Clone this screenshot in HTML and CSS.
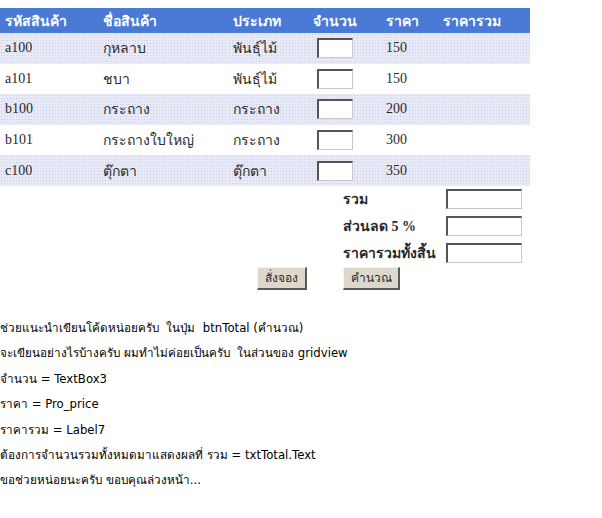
FILE: index.html
```html
<!DOCTYPE html>
<html>
<head>
<meta charset="utf-8">
<link rel="stylesheet" href="styles.css">
</head>
<body>
<table class="grid">
  <colgroup>
    <col class="c1"><col class="c2"><col class="c3"><col class="c4"><col class="c5"><col class="c6">
  </colgroup>
  <thead>
    <tr class="head"><th>รหัสสินค้า</th><th>ชื่อสินค้า</th><th>ประเภท</th><th>จำนวน</th><th>ราคา</th><th>ราคารวม</th></tr>
  </thead>
  <tbody>
    <tr class="alt"><td>a100</td><td>กุหลาบ</td><td>พันธุ์ไม้</td><td class="q"><span class="box qty"></span></td><td>150</td><td></td></tr>
    <tr><td>a101</td><td>ชบา</td><td>พันธุ์ไม้</td><td class="q"><span class="box qty"></span></td><td>150</td><td></td></tr>
    <tr class="alt"><td>b100</td><td>กระถาง</td><td>กระถาง</td><td class="q"><span class="box qty"></span></td><td>200</td><td></td></tr>
    <tr><td>b101</td><td>กระถางใบใหญ่</td><td>กระถาง</td><td class="q"><span class="box qty"></span></td><td>300</td><td></td></tr>
    <tr class="alt"><td>c100</td><td>ตุ๊กตา</td><td>ตุ๊กตา</td><td class="q"><span class="box qty"></span></td><td>350</td><td></td></tr>
  </tbody>
</table>
<div class="summary">
  <div class="srow"><span class="slabel">รวม</span><span class="box sbox"></span></div>
  <div class="srow"><span class="slabel">ส่วนลด 5 %</span><span class="box sbox"></span></div>
  <div class="srow"><span class="slabel">ราคารวมทั้งสิ้น</span><span class="box sbox"></span></div>
</div>
<div class="buttons">
  <span class="btn b1">สั่งจอง</span>
  <span class="btn b2">คำนวณ</span>
</div>
<div class="post">
  <p>ช่วยแนะนำเขียนโค้ดหน่อยครับ &nbsp;ในปุ่ม &nbsp;btnTotal (คำนวณ)</p>
  <p>จะเขียนอย่างไรบ้างครับ ผมทำไม่ค่อยเป็นครับ &nbsp;ในส่วนของ gridview</p>
  <p>จำนวน = TextBox3</p>
  <p>ราคา = Pro_price</p>
  <p>ราคารวม = Label7</p>
  <p>ต้องการจำนวนรวมทั้งหมดมาแสดงผลที่ รวม = txtTotal.Text</p>
  <p>ขอช่วยหน่อยนะครับ ขอบคุณล่วงหน้า...</p>
</div>
</body>
</html>
```

FILE: styles.css
```css
html, body {
  background: #ffffff;
}
body {
  margin: 8px 0 0 0;
  font-family: "Liberation Serif", Tahoma, serif;
  font-size: 14px;
  color: #2a2a2a;
}
.grid {
  border-collapse: collapse;
  width: 530px;
  table-layout: fixed;
}
.c1 { width: 98px; }
.c2 { width: 130px; }
.c3 { width: 80px; }
.c4 { width: 73px; }
.c5 { width: 57px; }
.c6 { width: 92px; }
.grid th {
  height: 25px;
  padding: 0 0 0 5px;
  text-align: left;
  color: #ffffff;
  font-weight: bold;
  font-size: 14px;
  background: #4a79d6;
}
.grid td {
  height: 30.6px;
  padding: 0 0 0 5px;
  text-align: left;
}
.grid tr.alt td {
  background-color: #e8e9f6;
  background-image: radial-gradient(circle, #c9cdec 0.8px, transparent 1px);
  background-size: 3px 3px;
}
.grid td.q {
  padding-left: 9px;
}
.box {
  display: block;
  box-sizing: border-box;
  background: #ffffff;
  border-style: solid;
  border-width: 2px 1px 1px 2px;
  border-color: #555555 #c8c8c8 #c8c8c8 #555555;
}
.qty {
  width: 36px;
  height: 20px;
}
.summary {
  display: flex;
  flex-direction: column;
  gap: 7px;
  padding: 3px 0 0 343px;
}
.srow {
  display: flex;
  align-items: center;
  height: 20px;
}
.slabel {
  width: 103px;
  font-weight: bold;
  font-size: 14px;
}
.sbox {
  width: 76px;
  height: 20px;
}
.buttons {
  display: flex;
  padding: 4px 0 0 257px;
  height: 24px;
}
.btn {
  box-sizing: border-box;
  height: 23px;
  display: flex;
  align-items: center;
  justify-content: center;
  font-size: 12px;
  background: #dcd9cc;
  border-style: solid;
  border-width: 1px 2px 2px 1px;
  border-color: #f4f2ea #5a5a5a #5a5a5a #f4f2ea;
}
.b1 { width: 50px; }
.b2 { width: 57px; margin-left: 36px; }
.post {
  padding-top: 30px;
  font-family: "DejaVu Sans", sans-serif;
  font-size: 11.7px;
  color: #000000;
}
.post p {
  margin: 0;
  height: 25.4px;
  line-height: 15px;
}
```
